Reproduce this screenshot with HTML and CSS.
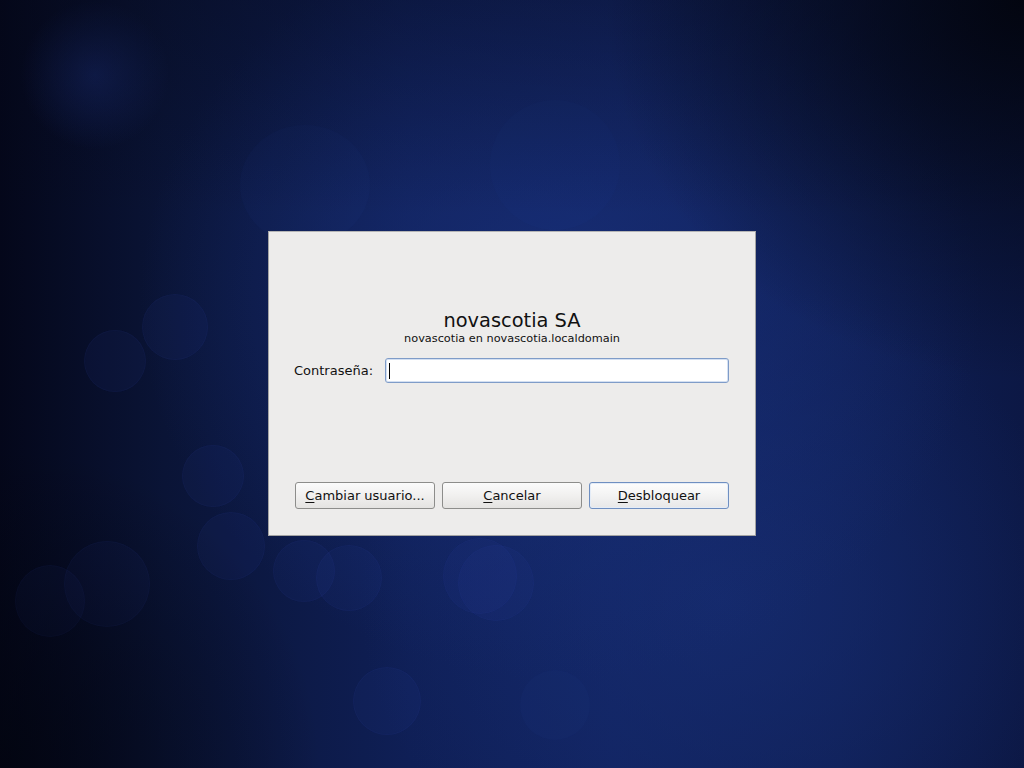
FILE: index.html
```html
<!DOCTYPE html>
<html lang="es">
<head>
<meta charset="utf-8">
<title>Desbloquear pantalla</title>
<link rel="stylesheet" href="styles.css">
</head>
<body>
<div class="desktop">
  <div class="bokeh">
    <span class="b glow" style="left:20px;top:0px;width:150px;height:150px"></span>
    <span class="b faint" style="left:240px;top:125px;width:130px;height:120px"></span>
    <span class="b faint" style="left:490px;top:100px;width:130px;height:130px"></span>
    <span class="b" style="left:142px;top:294px;width:66px;height:66px"></span>
    <span class="b" style="left:84px;top:330px;width:62px;height:62px"></span>
    <span class="b" style="left:182px;top:445px;width:62px;height:62px"></span>
    <span class="b" style="left:197px;top:512px;width:68px;height:68px"></span>
    <span class="b" style="left:64px;top:541px;width:86px;height:86px"></span>
    <span class="b" style="left:15px;top:565px;width:70px;height:72px"></span>
    <span class="b" style="left:273px;top:540px;width:62px;height:62px"></span>
    <span class="b" style="left:316px;top:545px;width:66px;height:66px"></span>
    <span class="b" style="left:443px;top:538px;width:74px;height:76px"></span>
    <span class="b" style="left:458px;top:545px;width:76px;height:76px"></span>
    <span class="b" style="left:353px;top:667px;width:68px;height:68px"></span>
    <span class="b faint" style="left:520px;top:670px;width:70px;height:70px"></span>
  </div>

  <div class="dialog">
    <div class="header">
      <div class="title">novascotia SA</div>
      <div class="subtitle">novascotia en novascotia.localdomain</div>
    </div>
    <div class="field">
      <label class="label" for="pw">Contraseña:</label>
      <div class="input"><span class="caret"></span></div>
    </div>
    <div class="buttons">
      <button class="btn"><u>C</u>ambiar usuario...</button>
      <button class="btn"><u>C</u>ancelar</button>
      <button class="btn default"><u>D</u>esbloquear</button>
    </div>
  </div>
</div>
</body>
</html>
```

FILE: styles.css
```css
html, body {
  margin: 0;
  padding: 0;
  width: 1024px;
  height: 768px;
  overflow: hidden;
}

body {
  font-family: "DejaVu Sans", sans-serif;
}

.desktop {
  position: relative;
  width: 1024px;
  height: 768px;
  display: flex;
  align-items: center;
  justify-content: center;
  background:
    radial-gradient(ellipse 420px 380px at 560px 300px, rgba(24, 46, 118, 0.85), rgba(24, 46, 118, 0) 100%),
    radial-gradient(ellipse 360px 320px at 720px 600px, rgba(22, 44, 112, 0.8), rgba(22, 44, 112, 0) 100%),
    linear-gradient(90deg, #04071a 0%, #0a1436 16%, #0f1f56 40%, #112360 60%, #0f1f55 82%, #0c1845 100%);
  overflow: hidden;
}

.desktop::after {
  content: "";
  position: absolute;
  inset: 0;
  background:
    radial-gradient(ellipse 420px 380px at 1024px 0px, rgba(2, 4, 12, 0.9), rgba(2, 4, 12, 0) 100%),
    radial-gradient(ellipse 320px 320px at 0px 768px, rgba(2, 4, 14, 0.75), rgba(2, 4, 14, 0) 100%),
    linear-gradient(180deg, rgba(5, 8, 24, 0.35) 0%, rgba(5, 8, 24, 0) 28%);
  pointer-events: none;
  z-index: 2;
}

.bokeh {
  position: absolute;
  inset: 0;
  z-index: 1;
}

.b {
  position: absolute;
  border-radius: 50%;
  background: rgba(40, 70, 170, 0.09);
  box-shadow: inset 0 0 0 1px rgba(60, 90, 190, 0.06);
}

.b.faint {
  background: rgba(40, 70, 170, 0.05);
  box-shadow: none;
}

.b.glow {
  background: radial-gradient(circle, rgba(26, 46, 120, 0.5), rgba(26, 46, 120, 0) 70%);
  box-shadow: none;
}

.dialog {
  position: relative;
  z-index: 3;
  box-sizing: border-box;
  width: 488px;
  height: 305px;
  margin-top: -1px;
  background: #edeceb;
  border: 1px solid #a3a3a3;
  border-top-color: #b5b5b5;
  padding: 76px 26px 26px 26px;
  display: flex;
  flex-direction: column;
  color: #111;
}

.header {
  display: flex;
  flex-direction: column;
  align-items: center;
}

.title {
  font-size: 19.4px;
  line-height: 23px;
  margin-top: 1px;
}

.subtitle {
  font-size: 11.3px;
  line-height: 14px;
}

.field {
  display: flex;
  align-items: center;
  margin-top: 12px;
}

.label {
  width: 91px;
  margin-left: -1px;
  font-size: 13px;
  line-height: 16px;
}

.input {
  box-sizing: border-box;
  flex: 1;
  height: 25px;
  background: #fff;
  border: 1px solid #7f9cc8;
  border-radius: 3px;
  box-shadow: inset 0 0 0 1px #d4e0f2;
  display: flex;
  align-items: center;
  padding-left: 3px;
}

.caret {
  width: 1px;
  height: 16px;
  background: #000;
}

.buttons {
  margin-top: auto;
  display: flex;
  gap: 7px;
}

.btn {
  box-sizing: border-box;
  width: 140px;
  height: 27px;
  font-family: "DejaVu Sans", sans-serif;
  font-size: 13px;
  color: #111;
  background: linear-gradient(180deg, #fbfbfb 0%, #f1f0ef 50%, #e4e3e1 100%);
  border: 1px solid #8d8d8b;
  border-radius: 3px;
  padding: 0;
  display: flex;
  align-items: center;
  justify-content: center;
}

.btn u {
  text-decoration: underline;
  text-underline-offset: 2px;
}

.btn.default {
  border-color: #6f8fc1;
  background: linear-gradient(180deg, #fdfdfd 0%, #f3f3f3 50%, #e7e7e8 100%);
  box-shadow: inset 0 0 0 1px #e4ecf7;
}
```
